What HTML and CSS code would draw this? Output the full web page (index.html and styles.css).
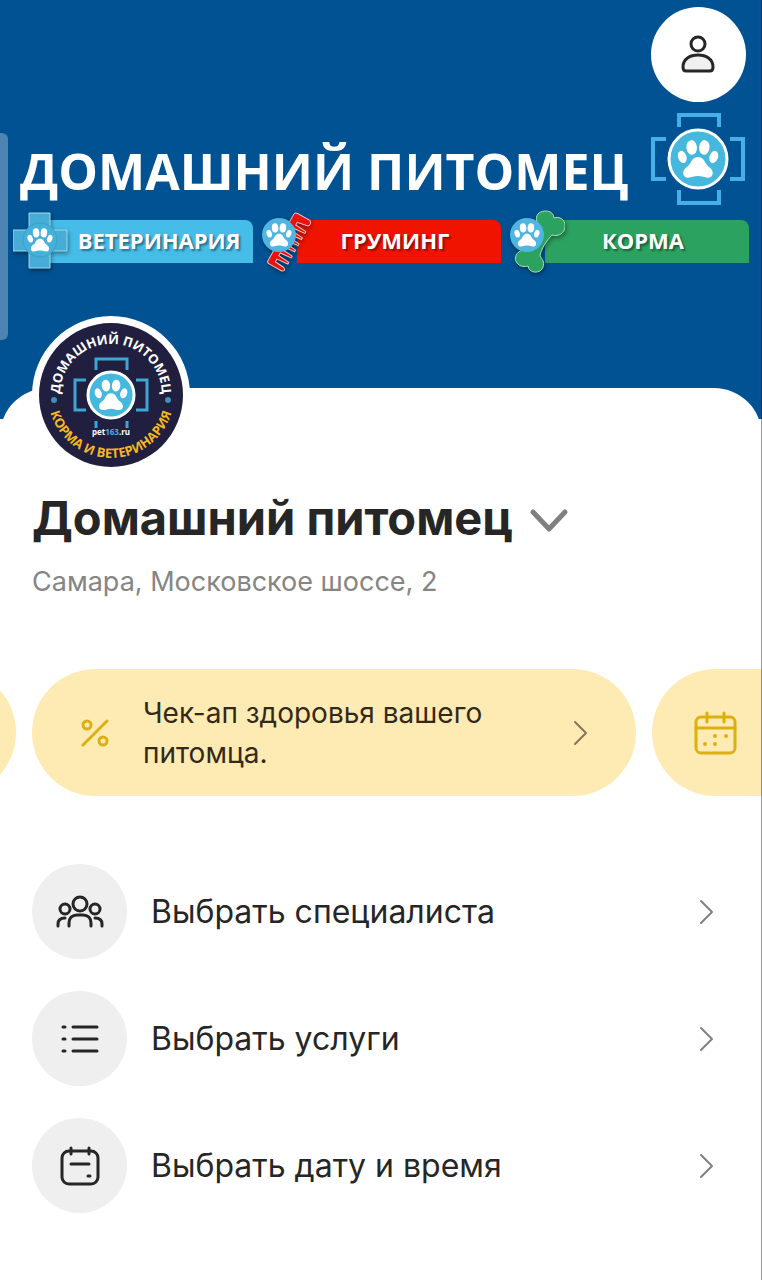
FILE: index.html
```html
<!DOCTYPE html>
<html lang="ru">
<head>
    <meta charset="UTF-8">
    <meta name="viewport" content="width=device-width, initial-scale=1.0">
    <title>Домашний питомец</title>
    <link rel="stylesheet" href="styles.css">
</head>
<body>
    <svg class="sprite" aria-hidden="true">
        <symbol id="paw" viewBox="0 0 40 40">
            <ellipse cx="5" cy="18" rx="4" ry="6" transform="rotate(-18 5 18)"/>
            <ellipse cx="14" cy="9" rx="5" ry="7" transform="rotate(-5 14 9)"/>
            <ellipse cx="26" cy="9" rx="5" ry="7" transform="rotate(5 26 9)"/>
            <ellipse cx="35" cy="18" rx="4" ry="6" transform="rotate(18 35 18)"/>
            <path d="M20 18c5 0 6 4 8 7 2 3 6 4 6 8 0 6-6 5-9 4-3-1-7-1-10 0-3 1-9 2-9-4 0-4 4-5 6-8 2-3 3-7 8-7z"/>
        </symbol>
        <symbol id="arrow" viewBox="0 0 16 26">
            <path d="M3 2l11 11L3 24" fill="none" stroke="currentColor" stroke-width="2" stroke-linecap="round" stroke-linejoin="round"/>
        </symbol>
    </svg>

    <div class="page">
        <header class="cover">
            <button class="profile" aria-label="Профиль">
                <svg width="36" height="40" viewBox="0 0 36 40">
                    <circle cx="17" cy="9" r="7"/>
                    <path d="M2 32c0-8 7-12 15-12s15 4 15 12c0 3-1 4-3 4H5c-2 0-3-1-3-4z" class="body-shape"/>
                </svg>
            </button>
            <div class="brand">
                <div class="brand-name">ДОМАШНИЙ ПИТОМЕЦ</div>
                <svg class="brand-logo" viewBox="0 0 94 94" aria-hidden="true">
                    <path d="M28 15V3h40v12M28 78v13h40V78M15 27H2v40h13M79 27h13v40H79" fill="none" stroke="#45b0e6" stroke-width="4"/>
                    <circle cx="47" cy="47" r="29" fill="#46b7dd" stroke="#fff" stroke-width="3"/>
                    <use href="#paw" x="26" y="26" width="42" height="42" fill="#fff"/>
                </svg>
            </div>
            <div class="tags">
                <div class="tag">
                    <svg class="tag-icon" viewBox="0 0 56 64" aria-hidden="true">
                        <g fill="#48add6" stroke="#9bd9f2" stroke-width="1">
                            <path d="M16 4h21v17h17v21H37v17H16V42H0V21h16z"/>
                            <circle cx="27" cy="31" r="17" fill="#44b1db" stroke="#3ba0ca"/>
                        </g>
                        <use href="#paw" x="14" y="18" width="26" height="26" fill="#fff"/>
                    </svg>
                    <span class="tag-label blue">ВЕТЕРИНАРИЯ</span>
                </div>
                <div class="tag">
                    <svg class="tag-icon" viewBox="0 0 56 64" aria-hidden="true">
                        <path d="M3 0H56Q58 0 58-3V-17Q56-21 54-17L53-7L50-7L49-19L47-19L46-7L43-7L42-19L40-19L39-7L36-7L35-19L33-19L32-7L29-7L28-19L26-19L25-7L22-7L21-19L19-19L18-7L15-7L14-19L12-19L11-7L8-7L6-18Q3-21 0-17V-3Q0 0 3 0z" transform="translate(34 3) rotate(119)" fill="#e81309" stroke="#e8c3cc" stroke-width="1"/>
                        <circle cx="18" cy="26" r="17" fill="#50b5e0"/>
                        <use href="#paw" x="5" y="13" width="26" height="26" fill="#fff"/>
                    </svg>
                    <span class="tag-label red">ГРУМИНГ</span>
                </div>
                <div class="tag">
                    <svg class="tag-icon" viewBox="0 0 56 64" aria-hidden="true">
                        <path d="M20 42C10 38 3 48 8 54C11 58 16 58 19 57C20 65 32 65 34 58C36 53 33 50 31 47C32 40 38 31 43 26C50 28 56 24 56 17C56 10 50 7 45 9C45 1 33 0 29 5C26 9 28 13 29 16z" fill="#2ca260" stroke="#a9e0c0" stroke-width="1"/>
                        <circle cx="18" cy="26" r="17" fill="#50b5e0"/>
                        <use href="#paw" x="5" y="13" width="26" height="26" fill="#fff"/>
                    </svg>
                    <span class="tag-label green">КОРМА</span>
                </div>
            </div>
            <div class="edge-handle"></div>
        </header>

        <main class="sheet">
            <svg class="avatar" viewBox="0 0 158 158" role="img" aria-label="Домашний питомец">
                <defs>
                    <path id="arc-top" d="M30 93A51 51 0 1 1 128 93"/>
                    <path id="arc-bottom" d="M16 79A63 63 0 0 0 142 79"/>
                </defs>
                <circle cx="79" cy="79" r="79" fill="#fff"/>
                <circle cx="79" cy="79" r="72" fill="#211f40"/>
                <path d="M64 54V43h31v11M64 105v7M95 105v7M54 64H43v30h11M104 64h11v30h-11" fill="none" stroke="#3fa5d4" stroke-width="3"/>
                <circle cx="79" cy="79" r="23" fill="#45b8e0" stroke="#fff" stroke-width="3"/>
                <use href="#paw" x="62" y="62" width="34" height="34" fill="#fff"/>
                <circle cx="22" cy="84" r="3" fill="#3f8fb8"/>
                <circle cx="136" cy="84" r="3" fill="#3f8fb8"/>
                <text class="avatar-name"><textPath href="#arc-top" startOffset="50%" text-anchor="middle">ДОМАШНИЙ ПИТОМЕЦ</textPath></text>
                <text class="avatar-note"><textPath href="#arc-bottom" startOffset="50%" text-anchor="middle">КОРМА И ВЕТЕРИНАРИЯ</textPath></text>
                <text class="avatar-site" x="79" y="119" text-anchor="middle">pet<tspan fill="#45b0e6">163</tspan>.ru</text>
            </svg>

            <h1>
                <button class="branch">
                    Домашний питомец
                    <svg width="40" height="26" viewBox="0 0 40 26" aria-hidden="true">
                        <path d="M4 4l16 17L36 4" fill="none" stroke="#808080" stroke-width="5" stroke-linecap="round" stroke-linejoin="round"/>
                    </svg>
                </button>
            </h1>
            <p class="address">Самара, Московское шоссе, 2</p>

            <div class="promos">
                <a class="promo" href="#" aria-label="Предыдущая акция"></a>
                <a class="promo" href="#">
                    <svg class="promo-icon" viewBox="0 0 46 46" aria-hidden="true">
                        <path d="M11 35L35 11"/>
                        <circle cx="15" cy="15" r="4"/>
                        <circle cx="31" cy="31" r="4"/>
                    </svg>
                    <span class="promo-text">Чек-ап здоровья вашего питомца.</span>
                    <svg class="arrow"><use href="#arrow"/></svg>
                </a>
                <a class="promo" href="#" aria-label="Запись">
                    <svg class="promo-icon" viewBox="0 0 46 46" aria-hidden="true">
                        <rect x="4" y="7" width="39" height="36" rx="5"/>
                        <path d="M4 18h39M15 3v9M32 3v9"/>
                        <path class="dots" d="M23 26h0M34 26h0M13 34h0M23 34h0"/>
                    </svg>
                </a>
            </div>

            <nav class="menu">
                <a class="menu-item" href="#">
                    <span class="menu-icon">
                        <svg viewBox="0 0 48 48" aria-hidden="true">
                            <circle cx="24" cy="16" r="7"/>
                            <circle cx="9" cy="21" r="5"/>
                            <circle cx="39" cy="21" r="5"/>
                            <path d="M13 38v-3c0-5 3-8 8-8h6c5 0 8 3 8 8v3M2 38v-2c0-4 2-6 7-6M46 38v-2c0-4-2-6-7-6"/>
                        </svg>
                    </span>
                    <span class="menu-text">Выбрать специалиста</span>
                    <svg class="arrow"><use href="#arrow"/></svg>
                </a>
                <a class="menu-item" href="#">
                    <span class="menu-icon">
                        <svg viewBox="0 0 48 48" aria-hidden="true">
                            <path d="M7 12h2M17 12h24M7 24h2M17 24h24M7 36h2M17 36h24"/>
                        </svg>
                    </span>
                    <span class="menu-text">Выбрать услуги</span>
                    <svg class="arrow"><use href="#arrow"/></svg>
                </a>
                <a class="menu-item" href="#">
                    <span class="menu-icon">
                        <svg viewBox="0 0 48 48" aria-hidden="true">
                            <rect x="6" y="9" width="36" height="33" rx="7"/>
                            <path d="M15 6v6M33 6v6M15 22h18M32 34h2"/>
                        </svg>
                    </span>
                    <span class="menu-text">Выбрать дату и время</span>
                    <svg class="arrow"><use href="#arrow"/></svg>
                </a>
            </nav>
        </main>
    </div>
</body>
</html>
```

FILE: styles.css
```css
* {
    box-sizing: border-box;
}
body {
    margin: 0;
    background: #fff;
    color: #262626;
    font-family: Inter, "Liberation Sans", sans-serif;
}
a {
    color: inherit;
    text-decoration: none;
}
button {
    border: none;
    padding: 0;
    color: inherit;
    font: inherit;
    cursor: pointer;
}
.sprite {
    display: none;
}
.page {
    position: relative;
    min-height: 100vh;
    overflow: hidden;
}
/* Тонкая линия по правому краю */
.page::after {
    content: "";
    position: absolute;
    top: 0;
    right: 0;
    bottom: 0;
    width: 1px;
    background: rgba(0, 0, 0, 0.4);
}

/* Обложка */
.cover {
    position: relative;
    display: flex;
    flex-direction: column;
    height: 419px;
    padding-top: 7px;
    background: #005292;
}
.profile {
    display: flex;
    align-items: center;
    justify-content: center;
    align-self: flex-end;
    width: 95px;
    height: 95px;
    margin-right: 16px;
    border-radius: 50%;
    background: #fff;
}
.profile svg {
    fill: none;
    stroke: #262626;
    stroke-width: 3;
}
.profile .body-shape {
    fill: #f0f0f0;
}
.brand {
    display: flex;
    align-items: center;
    justify-content: space-between;
    margin-top: 10px;
    padding: 0 17px 0 20px;
}
.brand-name {
    padding-top: 24px;
    color: #fff;
    font-family: "Open Sans", "Noto Sans", sans-serif;
    font-size: 50px;
    line-height: 68px;
    font-weight: 700;
    white-space: nowrap;
}
.brand-logo {
    flex: none;
    width: 94px;
    height: 94px;
}
.tags {
    display: grid;
    grid-template-columns: repeat(3, 1fr);
    gap: 8px;
    margin-top: 3px;
    padding: 0 13px;
}
.tag {
    display: flex;
    align-items: center;
}
.tag-icon {
    position: relative;
    z-index: 1;
    flex: none;
    width: 56px;
    height: 64px;
    filter: drop-shadow(1px 2px 2px rgba(0, 0, 0, 0.4));
}
.tag-label {
    flex: 1;
    margin-left: -20px;
    padding-right: 8px;
    padding-bottom: 2px;
    border-radius: 0 8px 0 0;
    color: #fff;
    font-family: "Open Sans", "Noto Sans", sans-serif;
    font-size: 22px;
    line-height: 41px;
    font-weight: 700;
    text-align: center;
    text-shadow: 2px 2px 2px rgba(0, 0, 0, 0.4);
}
.blue {
    padding-left: 24px;
    background: #46bde8;
}
.red {
    background: #f01400;
}
.green {
    background: #2ca260;
}
.edge-handle {
    position: absolute;
    top: 133px;
    left: 0;
    width: 8px;
    height: 207px;
    border-radius: 0 6px 6px 0;
    background: #4c85b1;
}

/* Основной блок */
.sheet {
    position: relative;
    display: flow-root;
    margin-top: -31px;
    padding: 0 32px 64px;
    border-radius: 48px 48px 0 0;
    background: #fff;
}
.avatar {
    display: block;
    width: 158px;
    height: 158px;
    margin-top: -72px;
}
.avatar-name,
.avatar-note,
.avatar-site {
    fill: #fff;
    font-family: "Open Sans", "Noto Sans", sans-serif;
    font-size: 13px;
    font-weight: 700;
}
.avatar-note {
    fill: #f5b81f;
}
.avatar-site {
    font-size: 8px;
}
h1 {
    margin: 12px 0 0;
    font-size: 47px;
    line-height: 64px;
    font-weight: 700;
}
.branch {
    display: flex;
    align-items: center;
    gap: 16px;
    background: none;
    white-space: nowrap;
}
.branch svg {
    margin-top: 6px;
}
.address {
    margin: 12px 0 0;
    color: #858585;
    font-size: 27px;
    line-height: 40px;
}

/* Акции */
.promos {
    display: flex;
    gap: 16px;
    margin: 67px -32px 0;
    padding-left: 32px;
    overflow: hidden;
}
.promo {
    display: flex;
    align-items: center;
    flex: none;
    width: 604px;
    min-height: 127px;
    padding: 0 48px 0 40px;
    border-radius: 64px;
    background: #feebb4;
}
.promo:first-child {
    margin-left: -620px;
}
.promo-icon {
    flex: none;
    width: 46px;
    height: 46px;
    fill: none;
    stroke: #dcb010;
    stroke-width: 3;
    stroke-linecap: round;
}
.promo-icon .dots {
    stroke-width: 4;
}
.promo-text {
    flex: 1;
    margin: 0 40px 0 25px;
    color: #33291a;
    font-size: 28px;
    line-height: 40px;
}
.arrow {
    flex: none;
    width: 16px;
    height: 26px;
    color: #808080;
}
.promo .arrow {
    color: #85755a;
}

/* Меню */
.menu {
    display: grid;
    gap: 32px;
    margin-top: 68px;
}
.menu-item {
    display: flex;
    align-items: center;
    gap: 24px;
    padding-right: 16px;
}
.menu-icon {
    display: flex;
    align-items: center;
    justify-content: center;
    width: 95px;
    height: 95px;
    border-radius: 50%;
    background: #efefef;
}
.menu-icon svg {
    width: 48px;
    height: 48px;
    fill: none;
    stroke: #262626;
    stroke-width: 3;
    stroke-linecap: round;
}
.menu-text {
    flex: 1;
    font-size: 32px;
    line-height: 40px;
}
```
